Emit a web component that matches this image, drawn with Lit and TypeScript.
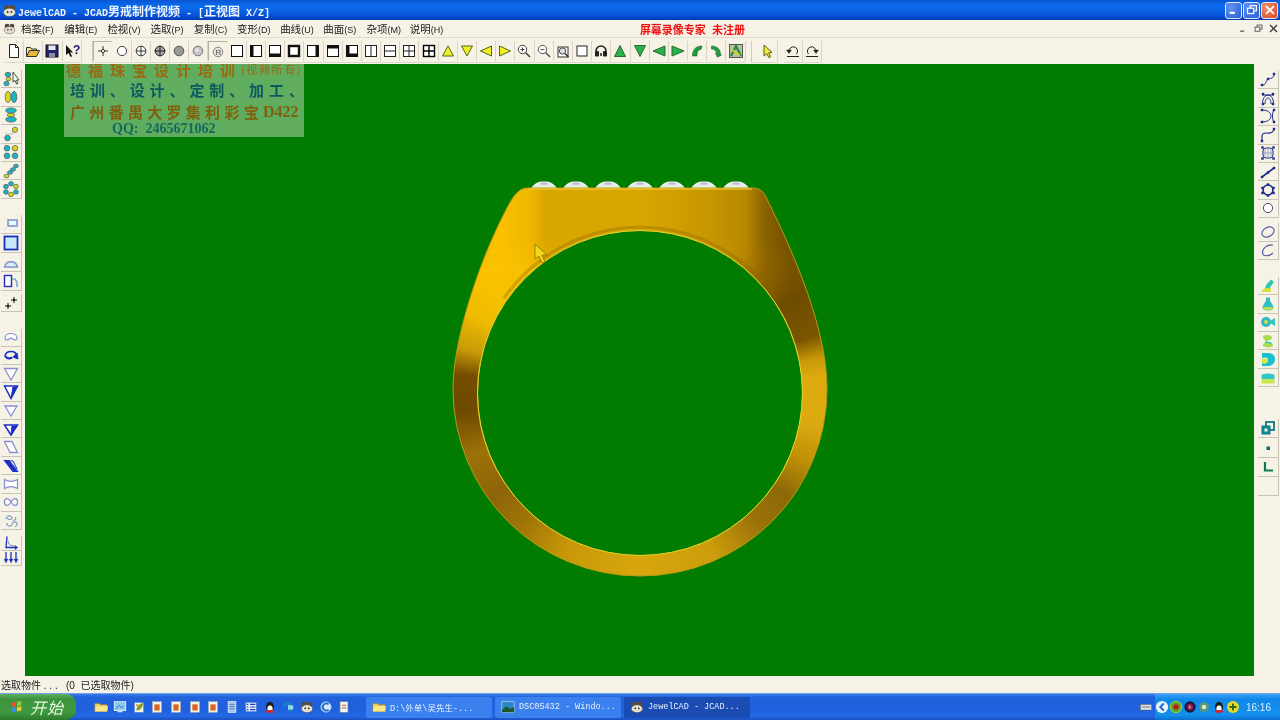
import { LitElement, html, css, svg, unsafeCSS } from "lit";
import { customElement } from "lit/decorators.js";

const BLUE = "#1c2fc4";
const TEAL = "#19b6c6";
const YEL = "#d6d81e";
const W = "#8a8fd0";

const ell = (x: number, y: number, rx: number, ry: number, f: string, s = "#555") =>
  svg`<ellipse cx=${x} cy=${y} rx=${rx} ry=${ry} fill=${f} stroke=${s} stroke-width=".7"/>`;
const poly = (p: string, f: string, s = "#333", w = 1) =>
  svg`<polygon points=${p} fill=${f} stroke=${s} stroke-width=${w}/>`;
const line = (d: string, s = "#222", w = 1) =>
  svg`<path d=${d} fill="none" stroke=${s} stroke-width=${w}/>`;
const node = (x: number, y: number, f = "#1b2a8a") => svg`<rect x=${x - 1.2} y=${y - 1.2} width="2.4" height="2.4" fill=${f}/>`;

// view panes: a square with the thick sides given by d
const pane = (d = "") => svg`<rect x="2.5" y="2.5" width="11" height="11" fill="#fff" stroke="#111"/>${d ? line(d, "#111", 3) : ""}`;

const topIcons = {
  file: [
    svg`<path d="M3.5 1.5h6l3 3v10h-9z" fill="#fff" stroke="#222"/><path d="M9.5 1.5v3h3" fill="none" stroke="#222"/>`,
    svg`<path d="M1.5 13.5v-9h4l1 1.5h5v2" fill="#f4e08a" stroke="#333"/><path d="M1.5 13.5l3-6h10l-3 6z" fill="#e2b93a" stroke="#333"/>`,
    svg`<rect x="2" y="2" width="12" height="12" fill="#23236e" stroke="#111"/><rect x="4.5" y="2.5" width="7" height="4.5" fill="#e8e8e8"/><rect x="5" y="10" width="6" height="4" fill="#8a8aa0"/>`,
    svg`<path d="M2 2v10l2.5-2 2 4 1.6-.8-2-3.8h3z" fill="#111"/><text x="9" y="11" font-size="12" font-weight="700" fill="#1a1a6a" font-family="Liberation Sans">?</text>`,
  ],
  view: [
    svg`${line("M8 3v10M3 8h10", "#333")}<circle cx="8" cy="8" r="1.6" fill="#fff" stroke="#333"/>`,
    svg`<circle cx="8" cy="8" r="4.6" fill="#fff" stroke="#444"/>`,
    svg`<circle cx="8" cy="8" r="4.8" fill="#fff" stroke="#333"/>${line("M8 3v10M3 8h10", "#333")}`,
    svg`<circle cx="8" cy="8" r="4.8" fill="#a8a8a8" stroke="#222"/>${line("M8 2.5v11M2.5 8h11", "#222")}`,
    svg`<circle cx="8" cy="8" r="4.8" fill="#9a9a9a" stroke="#555"/>`,
    svg`<circle cx="8" cy="8" r="4.8" fill="#c6c6c6" stroke="#777"/><circle cx="7" cy="7" r="2" fill="#e4e4e4"/>`,
    svg`<circle cx="8" cy="9" r="4.8" fill="#e4e0d6" stroke="#888"/><text x="5.4" y="12" font-size="8" fill="#555" font-family="Liberation Sans">R</text>`,
    pane(),
    pane("M4 3v10"),
    pane("M3 12h10"),
    svg`<rect x="3" y="3" width="10" height="10" fill="#fff" stroke="#111" stroke-width="2.4"/>`,
    pane("M12 3v10"),
    pane("M3 4h10"),
    svg`<rect x="2.5" y="2.5" width="11" height="11" fill="#fff" stroke="#111"/>${line("M4 3v10M3 12h10", "#111", 3)}`,
    svg`<rect x="2.5" y="2.5" width="11" height="11" fill="#fff" stroke="#222"/>${line("M8 3v10", "#222")}`,
    svg`<rect x="2.5" y="2.5" width="11" height="11" fill="#fff" stroke="#222"/>${line("M3 8h10", "#222")}`,
    svg`<rect x="2.5" y="2.5" width="11" height="11" fill="#fff" stroke="#222"/>${line("M8 3v10M3 8h10", "#222")}`,
    svg`<rect x="2.5" y="2.5" width="11" height="11" fill="#fff" stroke="#000" stroke-width="1.4"/>${line("M8 3v10M3 8h10", "#000", 1.4)}`,
    poly("8,3 13.5,13 2.5,13", "#f2ee2a", "#4a6a10"),
    poly("8,13 13.5,3 2.5,3", "#f2ee2a", "#4a6a10"),
    poly("2.5,8 13.5,3 13.5,13", "#f2ee2a", "#4a6a10"),
    poly("13.5,8 2.5,3 2.5,13", "#f2ee2a", "#4a6a10"),
    svg`<circle cx="6.5" cy="6.5" r="4.2" fill="#fff" stroke="#444"/>${line("M9.5 9.5l4.5 4.5", "#444", 1.6)}${line("M6.5 4.5v4M4.5 6.5h4", "#444")}`,
    svg`<circle cx="6.5" cy="6.5" r="4.2" fill="#fff" stroke="#555"/>${line("M9.5 9.5l4.5 4.5", "#555", 1.6)}${line("M4.5 6.5h4", "#555")}`,
    svg`<rect x="3" y="4" width="10" height="10" fill="#fff" stroke="#333"/><circle cx="7.5" cy="8" r="3.2" fill="#ddd" stroke="#444"/>${line("M10 10.5l3.5 3.5", "#333", 1.5)}`,
    svg`<rect x="3" y="3" width="10" height="10" fill="#fff" stroke="#222"/>`,
    svg`<path d="M3 8a5 5 0 0 1 10 0" fill="none" stroke="#222" stroke-width="1.6"/><rect x="2" y="8" width="4" height="5.5" rx="1" fill="#222"/><rect x="10" y="8" width="4" height="5.5" rx="1" fill="#222"/><rect x="7" y="10" width="2" height="3" fill="#555"/>`,
    poly("8,2.5 13.5,13.5 2.5,13.5", "#27b24a", "#2d6a2d"),
    poly("8,13.5 13.5,2.5 2.5,2.5", "#27b24a", "#2d6a2d"),
    poly("2,8 14,3 14,13", "#27b24a", "#2d6a2d"),
    poly("14,8 2,3 2,13", "#27b24a", "#2d6a2d"),
    svg`<path d="M13 3l-1 3.4C9 6.6 8 9 8 13H3.5c0-6 3-10 9.5-10z" fill="#1f9a3c" stroke="#1a6a2d" stroke-width=".6"/>`,
    svg`<path d="M3.5 3c6 0 9 4 9 8.5l1 .4-4 2.4-2-4 1 .4C8.6 8 6.5 6 3.5 6z" fill="#1f9a3c" stroke="#1a6a2d" stroke-width=".6"/>`,
    svg`<rect x="1.5" y="1.5" width="13" height="13" fill="#b8c0a0" stroke="#555"/><path d="M3 13L8 3l5 10" fill="none" stroke="#1f8a3c" stroke-width="2"/>${line("M4 7l8 5", "#d8d020", 2)}`,
  ],
  arrow: [svg`<path d="M4 2l8 7.5-3.4.3 2 4-1.8.8-2-4L4 13z" fill="#f4ee36" stroke="#5a5a10"/>`],
  undo: [
    svg`<path d="M4 8.5A4.3 4.3 0 1 1 11.5 11" fill="none" stroke="#222"/>${poly("1.5,7 6.5,7 4,10.5", "#222", "#222", .4)}${line("M2 13.5h12", "#222")}`,
    svg`<path d="M12 8.5A4.3 4.3 0 1 0 4.5 11" fill="none" stroke="#222"/>${poly("9.5,7 14.5,7 12,10.5", "#222", "#222", .4)}${line("M2 13.5h12", "#222")}`,
  ],
};

const cursorMark = svg`<path d="M10 1v10l2-1.6 1.6 3.6 1.4-.6L13.4 9H16z" fill="#fff" stroke="#222" stroke-width=".8"/>`;

const leftGroups = [
  { cls: "g1", items: [
    svg`${ell(5, 3.5, 2.8, 2.2, TEAL)}${ell(5.5, 8, 2.4, 1.9, YEL)}${ell(3.5, 12.5, 2.6, 2.2, TEAL)}${cursorMark}`,
    svg`${ell(5, 8, 2.8, 5.6, YEL)}${ell(11, 8, 2.8, 5.6, TEAL)}`,
    svg`${ell(8, 3.5, 5.4, 2.6, TEAL)}${ell(8, 8, 3.8, 1.8, YEL)}${ell(8, 12.5, 5.4, 2.6, TEAL)}`,
    svg`${line("M2 8h8V2", "#bbb")}${ell(12, 3.8, 2.6, 2.6, YEL)}${ell(4.5, 12, 2.8, 2.8, TEAL)}`,
    svg`${ell(4, 4.2, 2.8, 2.8, TEAL)}${ell(12, 4.2, 2.8, 2.8, YEL)}${ell(4, 11.8, 2.8, 2.8, TEAL)}${ell(12, 11.8, 2.8, 2.8, TEAL)}`,
    svg`${ell(3.5, 13, 2.6, 1.8, YEL)}${ell(7, 9.5, 2.6, 1.8, TEAL)}${ell(10, 6.5, 2.6, 1.8, TEAL)}${ell(13, 3, 2.4, 1.8, TEAL)}`,
    svg`${ell(8, 2.8, 2.4, 2.2, TEAL)}${ell(13, 5.5, 2.4, 2.2, YEL)}${ell(13, 11, 2.4, 2.2, TEAL)}${ell(8, 13.5, 2.4, 2.2, YEL)}${ell(3, 11, 2.4, 2.2, TEAL)}${ell(3, 5.5, 2.4, 2.2, TEAL)}`,
  ] },
  { cls: "g2", items: [
    svg`<rect x="5" y="4" width="9" height="6" fill="#dff" stroke=${W} stroke-width="1.6"/>${line("M1 14l4-4", "#cde", 1)}`,
    svg`<rect x="1.5" y="1.5" width="13" height="13" fill="#c8e8f8" stroke=${BLUE} stroke-width="1.8"/>`,
    svg`<path d="M1.5 13C3 6 13 6 14.5 13z" fill="#d4f0f8" stroke=${W} stroke-width="1.4"/>`,
    svg`<rect x="1.5" y="2.5" width="7" height="11" fill="#fff" stroke=${BLUE} stroke-width="1.4"/><path d="M9 6h3l2 3v5" fill="none" stroke="#7ad" stroke-width="1.6"/>`,
  ] },
  { cls: "g3", items: [
    svg`${line("M11 3v6M8 6h6M5 9v6M2 12h6", "#111", 1)}<circle cx="11" cy="6" r="1" fill="#111"/><circle cx="5" cy="12" r="1" fill="#111"/>`,
  ] },
  { cls: "g4", items: [
    svg`<path d="M2 9C2 3 14 3 14 9c0 3-3 2-6 0-3 2-6 3-6 0z" fill="#fff" stroke=${W} stroke-width="1.2"/>`,
    svg`<path d="M2 9C3 3 13 3 14 9" fill="none" stroke=${BLUE} stroke-width="1.6"/><path d="M2 9c2 3 6 3 7 1" fill="none" stroke=${BLUE} stroke-width="2.2"/>${poly("14,6 15,12 10,10", BLUE, BLUE)}`,
    poly("1.5,2.5 14.5,2.5 8,14", "#fff", W, 1.3),
    svg`${poly("1.5,2 14.5,2 8,14.5", "#fff", BLUE, 1.5)}${poly("10,3 14,3 8,14", BLUE, BLUE)}`,
    poly("2,4 14,4 8,14", "#fff", W, 1.3),
    svg`${poly("1.5,4 14.5,4 8,14", "#fff", BLUE, 1.5)}${poly("9,5 14,5 8,13.5", BLUE, BLUE)}`,
    poly("1.5,2.5 9,2.5 14.5,13.5 7,13.5", "#fff", W, 1.3),
    svg`${poly("1.5,2.5 6,2.5 14.5,13.5 10,13.5", BLUE, BLUE, 1.2)}${line("M6 3h4l4 8", BLUE, 1)}`,
    svg`<path d="M1.5 3.5C6 6 10 6 14.5 3.5v9C10 10 6 10 1.5 12.5z" fill="#fff" stroke=${W} stroke-width="1.3"/>`,
    svg`<path d="M8 8C5 3 1.5 4 1.5 8S5 13 8 8s6.500-4 6.500 0S11 13 8 8z" fill="#fff" stroke=${W} stroke-width="1.3"/>`,
    svg`${line("M3 6c0-4 6-4 6-1s-5 1-5 0M12 4c2 2 0 4-2 3M4 10c-1 3 4 4 5 2s-1-3 3-3 2 4 0 5", "#5a7ab0", 1)}`,
  ] },
  { cls: "g5", items: [
    svg`${line("M4 1.500L3 12.500h9", BLUE, 1.3)}${line("M5 6c1 4 3 5 6 5", "#5a7ab0", 1)}${poly("12,10.500 15,12.500 12,14.500", BLUE, BLUE, .4)}`,
    svg`${line("M3 2v8M8 2v8M13 2v8", BLUE, 1.3)}${poly("1,9 5,9 3,13", BLUE, BLUE, .3)}${poly("6,9 10,9 8,13", BLUE, BLUE, .3)}${poly("11,9 15,9 13,13", BLUE, BLUE, .3)}`,
  ] },
];

const N = "#1b2a8a";
const rightGroups = [
  { cls: "r1", items: [
    svg`${line("M2 13c4 1 4-5 6-6s6 0 6-5", N, 1)}${node(2, 13)}${node(8, 7)}${node(14, 2)}`,
    svg`${line("M2.500 14C2.500 2 13.500 2 13.500 14M5 14C5 6 11 6 11 14M2 5h12", N, 1)}${node(3, 4)}${node(13, 4)}${node(3, 14)}${node(13, 14)}`,
    svg`${line("M2 2c6 0 9 3 9 6s-3 6-9 6", N, 1)}${line("M14 2c-2 2-2 10 0 12", N, 1)}${node(2, 2)}${node(2, 14)}${node(14, 2)}${node(14, 14)}`,
    svg`${line("M2 14V9c0-3 4-3 5-3s6 1 7-4", N, 1.2)}${node(2, 14)}${node(14, 2)}`,
    svg`<rect x="3" y="3" width="10" height="10" rx="3" fill="none" stroke=${N}/>${line("M3 8h10M8 3v10M5 3v10M11 3v10", "#7a86b8", .7)}${node(2.500, 2.500)}${node(13.500, 2.500)}${node(2.500, 13.500)}${node(13.500, 13.500)}`,
    svg`${line("M2 13L14 4", N, 1.6)}${node(2, 13)}${node(8, 8.500)}${node(14, 4)}`,
    svg`<circle cx="8" cy="8" r="5" fill="none" stroke=${N} stroke-width="1.6"/>${node(8, 2.500)}${node(13.500, 6)}${node(13.500, 11)}${node(8, 13.500)}${node(2.500, 11)}${node(2.500, 6)}`,
    svg`<circle cx="8" cy="8" r="4.600" fill="#fff" stroke="#46507c"/>`,
  ] },
  { cls: "r2", items: [
    svg`<ellipse cx="8" cy="8" rx="6.500" ry="4.600" transform="rotate(-30 8 8)" fill="none" stroke="#5a5aa8" stroke-width="1.100"/>`,
    svg`<path d="M13 3C7 2 2 7 2.500 11S9 14.500 13 11" fill="none" stroke="#5a5aa8" stroke-width="1.100"/>`,
  ] },
  { cls: "r3", items: [
    svg`<path d="M11 1.500l3 2.500-5 7H5l1-4z" fill="#33c8b0"/><path d="M2 14c0-3 2-4 4-4h5v4z" fill="#d0e040"/>`,
    svg`<path d="M6 1.500h4v3l3.500 6c0 3-2 4-5.500 4s-5.500-1-5.500-4L6 4.500z" fill="#30c0c8"/><path d="M3 11h10c0 2-2 3.500-5 3.500S3 13 3 11z" fill="#b8e050"/>`,
    svg`<circle cx="6" cy="8" r="5" fill="#30b8c8"/><path d="M10 7l5-3v8l-5-3z" fill="#30c8c0"/><circle cx="6" cy="8" r="2" fill="#d0e040"/>`,
    svg`<path d="M3 3c4-2 9-1 9 2s-7 2-7 4 8 0 8 3-6 3-10 1c-1-3 4-3 4-4S3 7 3 3z" fill="#a8dc50"/><path d="M5 9c3 1 6 0 6 2" stroke="#30c8b0" stroke-width="1.400" fill="none"/>`,
    svg`<path d="M2 2h6c5 0 7 3 7 6s-2 7-7 7H2v-3c3 1 6 0 6-3s-3-3-6-2z" fill="#18c0d0"/><path d="M2 8c4-1 6 0 6 2s-2 3-6 2z" fill="#d8e840"/>`,
    svg`<path d="M1.500 5c4-2 9-2 13 0v4H1.500z" fill="#30c8c8"/><rect x="1.500" y="9" width="13" height="4.500" fill="#c8e850"/>`,
  ] },
  { cls: "r4", items: [
    svg`<rect x="6" y="2" width="8" height="8" fill="none" stroke="#0f7a82" stroke-width="1.800"/><rect x="2" y="6" width="8" height="8" fill="#0f8a92" stroke="#0f7a82"/><rect x="4.500" y="8.500" width="3" height="3" fill="#f4f0e4"/>`,
    svg`<rect x="6.500" y="6.500" width="3.500" height="3.500" fill="#0f6a72"/>`,
    svg`${line("M5 3v8.500h8", "#0f7a52", 2.200)}`,
    svg``,
  ] },
];

const menus = [
  ["档案", "F"], ["编辑", "E"], ["检视", "V"], ["选取", "P"], ["复制", "C"],
  ["变形", "D"], ["曲线", "U"], ["曲面", "S"], ["杂项", "M"], ["说明", "H"],
];

const xpFolder = svg`<path d="M1 13V4h5l1.500 1.500H15V13z" fill="#f2cf5a" stroke="#a8842a" stroke-width=".7"/><path d="M1 13l1-6h14l-1 6z" fill="#fbe58a"/>`;
const ringFace = svg`<circle cx="5" cy="5" r="3" fill="#5a4a3a"/><circle cx="11" cy="5" r="3" fill="#5a4a3a"/><ellipse cx="8" cy="10" rx="6.500" ry="4.500" fill="#e8e0d0" stroke="#444" stroke-width=".6"/><circle cx="6" cy="9.500" r="1" fill="#222"/><circle cx="10" cy="9.500" r="1" fill="#222"/>`;
const redBook = svg`<rect x="3" y="2" width="10" height="12" fill="#f4f2e8" stroke="#c8c4b0" stroke-width=".5"/><rect x="5" y="5" width="6" height="7" fill="#d8641c"/>`;
const penguin = svg`<ellipse cx="8" cy="8" rx="4.500" ry="6" fill="#1a1a1a"/><ellipse cx="8" cy="10" rx="3" ry="3.600" fill="#fff"/><path d="M3 13c2-2 8-2 10 0l-2 1.500H5z" fill="#e02020"/><path d="M6.500 6h3L8 7.500z" fill="#f0b020"/>`;

const quick = [
  xpFolder,
  svg`<rect x="1.500" y="2" width="13" height="10" fill="#8ec8ee" stroke="#e8f4ff"/><path d="M3 10l4-4 3 3 2-2" stroke="#2a6aa8" fill="none"/><rect x="5" y="12" width="6" height="2" fill="#cde"/>`,
  svg`<rect x="3" y="3" width="10" height="11" fill="#f4f4ea"/><path d="M5 12c0-5 4-8 8-9-1 5-3 9-8 9z" fill="#7aa020"/><circle cx="6" cy="6" r="1.500" fill="#e8a020"/>`,
  redBook, redBook, redBook, redBook,
  svg`<rect x="3.500" y="1.500" width="9" height="13" fill="#aac4ec" stroke="#e4eefc" stroke-width=".7"/>${line("M5 5h6M5 7.500h6M5 10h6", "#4a6ab0", .8)}`,
  svg`<rect x="2" y="3" width="12" height="10" fill="#e8f0fc"/>${line("M3 5h2M7 5h6M3 8h2M7 8h6M3 11h2M7 11h6", "#1a3a9c", 1.300)}`,
  penguin,
  svg`<path d="M2 3l10-1v12l-4-1V6L2 7z" fill="#1f7ac8"/><path d="M8 6h6v5H8z" fill="#8adce8"/>`,
  ringFace,
  svg`<circle cx="8" cy="8" r="6" fill="#d8e8fc" stroke="#7ab0e8"/><path d="M11 5A4 4 0 1 0 11 11" stroke="#2868c8" stroke-width="2" fill="none"/>`,
  svg`<rect x="3.500" y="2" width="9" height="12" fill="#f4f4f0" stroke="#888" stroke-width=".6"/>${line("M5.500 6h5M5.500 9h5", "#a05020", 1)}`,
];

const tray = [
  svg`<rect x="1.500" y="5" width="13" height="6.500" fill="#dde4ee" stroke="#555" stroke-width=".6"/>${line("M3 8h10", "#666", 1)}`,
  svg`<circle cx="8" cy="8" r="7" fill="#e8f4fc"/><path d="M10 4L6 8l4 4" stroke="#1a6ad0" stroke-width="2.200" fill="none"/>`,
  svg`<circle cx="8" cy="8" r="6.500" fill="#50b030" stroke="#c0d820"/><circle cx="8" cy="8" r="3.200" fill="#c81818"/>`,
  svg`<circle cx="8" cy="8" r="6.500" fill="#1a1a3a"/><circle cx="8" cy="8" r="3.600" fill="#a01848"/><path d="M6.800 6l3 2-3 2z" fill="#8ab0f0"/>`,
  svg`<path d="M2 5l6-3 6 3-2 8H4z" fill="#5a9a70"/><circle cx="8" cy="8" r="2.600" fill="#d8e8e0"/>`,
  penguin,
  svg`<circle cx="8" cy="8" r="6.800" fill="#ecd820"/><path d="M8 4v8M4 8h8" stroke="#2a6a1a" stroke-width="2.200"/>`,
];

const RING_PATH =
  "M88 17L312 17C319 17 323 20 325 24C345 65 387 150 387 218A187 187 0 0 1 13 218C13 170 38 92 67 37C75 22 80 17 88 17ZM37.500 222A162.500 162.500 0 1 0 362.500 222A162.500 162.500 0 1 0 37.500 222Z";

@customElement("app-root")
export class AppRoot extends LitElement {
  static styles = css`
    :host {
      display: block;
      width: 1280px;
      height: 720px;
      overflow: hidden;
      font-family: "Liberation Sans", "Noto Sans CJK SC", sans-serif;
    }
    .app {
      width: 1280px;
      height: 720px;
      display: flex;
      flex-direction: column;
      background: #f6f2e6;
      filter: blur(0.4px);
    }
    svg {
      display: block;
      flex: none;
    }

    .titlebar {
      height: 20px;
      flex: none;
      display: flex;
      align-items: center;
      background: linear-gradient(#0a55d5, #0a6cec 30%, #0a62e4 55%, #0548d0 88%, #0238a8);
      color: #eef4ff;
      font: 700 10px "Liberation Mono", "Noto Sans CJK SC", monospace;
      padding: 0 2px;
      box-sizing: border-box;
    }
    .title-text {
      margin-left: 1px;
      white-space: pre;
    }
    .cjk {
      font: 700 12px "Noto Sans CJK SC", sans-serif;
    }
    .win-btns {
      margin-left: auto;
      display: flex;
      gap: 1px;
    }
    .win-btn {
      width: 17px;
      height: 17px;
      border: 1px solid #dfe8ff;
      border-radius: 3px;
      box-sizing: border-box;
      background: radial-gradient(circle at 30% 30%, #5f92f2, #2a5fd8);
      display: flex;
      align-items: center;
      justify-content: center;
    }
    .win-btn.close {
      background: radial-gradient(circle at 30% 30%, #f09070, #d8481c);
    }

    .menubar {
      height: 17px;
      flex: none;
      display: flex;
      align-items: center;
      padding-left: 3px;
      font-size: 10.5px;
      color: #222;
      border-bottom: 1px solid #e2decf;
    }
    .menu-item {
      width: 43.200px;
      white-space: nowrap;
    }
    .menu-items {
      display: flex;
      margin-left: 5px;
    }
    .latin {
      font-size: 9px;
    }
    .reg {
      margin-left: 187px;
      color: #ee1010;
      font-size: 11px;
      font-weight: 700;
      white-space: pre;
    }
    .mdi {
      margin-left: auto;
      display: flex;
      gap: 4px;
      padding-right: 1px;
    }

    .toolbar {
      height: 26px;
      flex: none;
      display: flex;
      align-items: center;
      padding: 1px 0 0 5px;
      box-sizing: border-box;
    }
    .tgroup {
      display: flex;
      height: 21px;
      align-items: center;
      border-bottom: 1px solid #dcd8ca;
    }
    .tgroup.view {
      margin-left: 10.500px;
      border-left: 1px solid #cfcbbc;
    }
    .tgroup.arrow {
      margin-left: 5px;
      border-left: 1px solid #cfcbbc;
      padding-left: 7px;
    }
    .tgroup.undo {
      margin-left: 6px;
    }
    .tb {
      width: 19.200px;
      height: 20px;
      box-sizing: border-box;
      display: flex;
      align-items: center;
      justify-content: center;
      border-right: 1px solid #d8d4c6;
    }
    .tb.on {
      border: 1px solid #b4b0a2;
      border-right-color: #f4f0e2;
      border-bottom-color: #f4f0e2;
    }

    .main {
      flex: 1;
      min-height: 0;
      display: flex;
    }
    .side {
      flex: none;
      display: flex;
      flex-direction: column;
      box-sizing: border-box;
    }
    .side.left {
      width: 25px;
      padding: 6px 3px 0 1px;
    }
    .side.right {
      width: 26px;
      padding: 7px 1px 0 4px;
    }
    .sgroup {
      display: flex;
      flex-direction: column;
    }
    .sb {
      height: 18.400px;
      flex: none;
      display: flex;
      align-items: center;
      justify-content: center;
      box-sizing: border-box;
      border-right: 1px solid #c8c4b6;
      border-bottom: 1px solid #c8c4b6;
    }
    .g2 {
      margin-top: 16px;
    }
    .g2 .sb {
      height: 19px;
    }
    .g3 {
      margin-top: 3px;
    }
    .g4 {
      margin-top: 16px;
    }
    .g5 {
      margin-top: 6px;
    }
    .g5 .sb {
      height: 15px;
    }
    .r2 {
      margin-top: 5px;
    }
    .r3 {
      margin-top: 17px;
    }
    .r4 {
      margin-top: 32px;
    }
    .r4 .sb {
      height: 19.200px;
    }

    .canvas {
      flex: 1;
      position: relative;
      background: #017c01;
      overflow: hidden;
    }
    .watermark {
      position: absolute;
      left: 39px;
      top: 0;
      width: 240px;
      height: 73px;
      background: #60ad60;
      display: grid;
      grid-template-rows: 11px 29px 15px 18px;
      font-family: "Noto Sans CJK SC", sans-serif;
      font-weight: 700;
      font-size: 15px;
      line-height: 15px;
      white-space: nowrap;
    }
    .wm {
      display: flex;
      align-items: center;
    }
    .wm1 {
      color: #9a6a10;
      padding-left: 2px;
      letter-spacing: 7px;
      line-height: 11px;
    }
    .wm-small {
      font-size: 11px;
      letter-spacing: 1.600px;
      font-weight: 400;
      margin-left: -1px;
    }
    .wm2 {
      color: #0d5a62;
      padding-left: 6px;
      letter-spacing: 4.900px;
    }
    .wm3 {
      color: #80600c;
      padding-left: 6px;
      letter-spacing: 4.300px;
    }
    .wm-serif {
      font-family: "Liberation Serif", serif;
      font-size: 16px;
      letter-spacing: 0;
    }
    .wm4 {
      color: #14685e;
      padding: 2px 0 0 48px;
      font: 700 14px "Liberation Serif", serif;
      white-space: pre;
    }

    /* ring sits on the free canvas, at its place in the view */
    .ring-box {
      position: absolute;
      left: 415px;
      top: 107px;
      width: 400px;
      height: 420px;
    }
    .band {
      position: absolute;
      inset: 0;
      clip-path: path(evenodd, "${unsafeCSS(RING_PATH)}");
    }
    .conic {
      position: absolute;
      inset: 0;
      background: conic-gradient(
        from 0deg at 200px 222px,
        #d8a400 0deg,
        #cc9800 30deg,
        #946800 45deg,
        #6e4c00 58deg,
        #7a5600 72deg,
        #c89a08 79deg,
        #deaa10 85deg,
        #dcaa10 100deg,
        #c09008 112deg,
        #8c6808 125deg,
        #9a7208 138deg,
        #cc9c0c 155deg,
        #d8a60c 180deg,
        #c89808 205deg,
        #a07408 222deg,
        #8c6408 235deg,
        #9c7208 250deg,
        #6e4a00 264deg,
        #744e00 276deg,
        #c89a08 284deg,
        #f0bc00 295deg,
        #ffc800 320deg,
        #e0ac00 345deg,
        #d8a400 360deg
      );
    }
    .plate {
      position: absolute;
      inset: 0;
      background: linear-gradient(
        90deg,
        #fbc000 60px,
        #eeb600 92px,
        #daa600 104px,
        #d8a600 200px,
        #c89600 270px,
        #b88800 305px,
        #8a6200 325px,
        #6e4c00 352px
      );
      -webkit-mask-image: linear-gradient(#000 70px, transparent 135px);
      mask-image: linear-gradient(#000 70px, transparent 135px);
    }
    .ring-lines {
      position: absolute;
      inset: 0;
    }
    .stones {
      position: absolute;
      left: 91px;
      top: 10px;
      display: flex;
      gap: 6px;
    }

    .statusbar {
      height: 17px;
      flex: none;
      display: flex;
      align-items: center;
      padding-left: 1px;
      font-size: 10px;
      color: #222;
      white-space: pre;
    }
    .taskbar {
      height: 27px;
      flex: none;
      display: flex;
      align-items: center;
      box-sizing: border-box;
      border-top: 1px solid #6ea4f0;
      background: linear-gradient(#3a7cec, #2263dc 12%, #1f5fdc 55%, #2468e4 85%, #1a50c0);
    }
    .start {
      width: 76px;
      height: 26px;
      flex: none;
      display: flex;
      align-items: center;
      gap: 6px;
      padding-left: 10px;
      box-sizing: border-box;
      color: #e8f4e0;
      font-size: 16px;
      font-style: italic;
      letter-spacing: 1px;
      border-radius: 0 10px 10px 0;
      background: linear-gradient(#5fae5f, #3d933d 20%, #3f9a3f 70%, #2c7a2c);
    }
    .quick {
      display: flex;
      margin-left: 16px;
      width: 274px;
      flex: none;
    }
    .q {
      width: 18.700px;
      flex: none;
      display: flex;
      justify-content: center;
    }
    .tasks {
      display: flex;
      gap: 3px;
    }
    .task {
      height: 21px;
      width: 126px;
      display: flex;
      align-items: center;
      gap: 4px;
      padding-left: 6px;
      box-sizing: border-box;
      border-radius: 2px;
      background: #3a80ee;
      color: #e8f0ff;
      font: 8.500px "Liberation Mono", "Noto Sans CJK SC", monospace;
      white-space: pre;
      overflow: hidden;
    }
    .task.active {
      background: #1a4cb4;
    }
    .tray {
      margin-left: auto;
      height: 26px;
      display: flex;
      align-items: center;
      color: #dcecff;
      font-size: 10px;
    }
    .tray-keyboard {
      margin-right: 2px;
    }
    .tray-area {
      height: 26px;
      display: flex;
      align-items: center;
      gap: 0.200px;
      background: linear-gradient(#3ea0f4, #1088ea 20%, #1290ec 80%, #0c70d0);
    }
    .clock {
      margin-left: 6px;
      padding-right: 9px;
    }
  `;

  private icon(content: unknown, size = 16) {
    return html`<svg viewBox="0 0 16 16" width=${size} height=${size}>${content}</svg>`;
  }

  private renderSide(groups: { cls: string; items: unknown[] }[], side: string) {
    return html`<div class="side ${side}">
      ${groups.map(
        (g) => html`<div class="sgroup ${g.cls}">
          ${g.items.map((i) => html`<div class="sb">${this.icon(i)}</div>`)}
        </div>`
      )}
    </div>`;
  }

  private renderRing() {
    const stones = [0, 1, 2, 3, 4, 5, 6];
    return html`<div class="ring-box">
      <div class="stones">
        ${stones.map(
          () => html`<svg width="26" height="7" viewBox="0 0 26 7">
            <path d="M0 7C3 3 7 .5 10 .5h6c3 0 7 2.500 10 6.500z" fill="#e8eeea"/>
            <path d="M8 3l3-1.500h4l3 1.500-5 1z" fill="#b8bcd4"/>
          </svg>`
        )}
      </div>
      <div class="band">
        <div class="conic"></div>
        <div class="plate"></div>
      </div>
      <svg class="ring-lines" width="400" height="420" viewBox="0 0 400 420">
        <path d="M64 127A166 166 0 0 1 336 127" fill="none" stroke="#8a6400" stroke-width="3" opacity=".35"/>
        <path d=${RING_PATH} fill="none" stroke="#b89a10" stroke-width="1"/>
        <circle cx="200" cy="222" r="162.500" fill="none" stroke="#e8d428" stroke-width="1"/>
        <path d="M88 18L312 18" stroke="#f2d840" stroke-width="1"/>
        <path d="M95 73v15l4-3 3 7 3-1-3-7h5z" fill="#f0d818" stroke="#8a7000" stroke-width=".8"/>
      </svg>
    </div>`;
  }

  render() {
    return html`<div class="app">
      <div class="titlebar">
        ${this.icon(ringFace, 15)}
        <span class="title-text">JewelCAD - JCAD<span class="cjk">男戒制作视频</span> - [<span class="cjk">正视图</span> X/Z]</span>
        <div class="win-btns">
          <div class="win-btn">${this.icon(svg`<rect x="3" y="10" width="6" height="2.500" fill="#fff"/>`, 14)}</div>
          <div class="win-btn">${this.icon(svg`<rect x="6" y="3" width="7" height="6" fill="none" stroke="#fff" stroke-width="1.300"/><rect x="3" y="6" width="7" height="6" fill="#3a6ee0" stroke="#fff" stroke-width="1.300"/>`, 14)}</div>
          <div class="win-btn close">${this.icon(svg`<path d="M3.500 3.500l9 9M12.500 3.500l-9 9" stroke="#fff" stroke-width="2"/>`, 14)}</div>
        </div>
      </div>

      <div class="menubar">
        ${this.icon(ringFace, 13)}
        <div class="menu-items">
          ${menus.map(([t, k]) => html`<span class="menu-item">${t}<span class="latin">(${k})</span></span>`)}
        </div>
        <span class="reg">屏幕录像专家  未注册</span>
        <div class="mdi">
          ${this.icon(svg`<rect x="3" y="11" width="6" height="1.600" fill="#444"/>`, 11)}
          ${this.icon(svg`<rect x="6" y="3" width="7" height="6" fill="none" stroke="#555" stroke-width="1.300"/><rect x="3" y="6" width="7" height="6" fill="#f6f2e6" stroke="#555" stroke-width="1.300"/>`, 11)}
          ${this.icon(svg`<path d="M3 3l10 10M13 3L3 13" stroke="#444" stroke-width="2.200"/>`, 11)}
        </div>
      </div>

      <div class="toolbar">
        <div class="tgroup">${topIcons.file.map((i) => html`<div class="tb">${this.icon(i)}</div>`)}</div>
        <div class="tgroup view">${topIcons.view.map((i, n) => html`<div class="tb ${n === 0 || n === 6 ? "on" : ""}">${this.icon(i)}</div>`)}</div>
        <div class="tgroup arrow">${topIcons.arrow.map((i) => html`<div class="tb">${this.icon(i)}</div>`)}</div>
        <div class="tgroup undo">${topIcons.undo.map((i) => html`<div class="tb">${this.icon(i)}</div>`)}</div>
      </div>

      <div class="main">
        ${this.renderSide(leftGroups, "left")}
        <div class="canvas">
          <div class="watermark">
            <div class="wm wm1">德福珠宝设计培训<span class="wm-small">(视频所有)</span></div>
            <div class="wm wm2">培训、设计、定制、加工、</div>
            <div class="wm wm3">广州番禺大罗集利彩宝<span class="wm-serif">D422</span></div>
            <div class="wm wm4">QQ:  2465671062</div>
          </div>
          ${this.renderRing()}
        </div>
        ${this.renderSide(rightGroups, "right")}
      </div>

      <div class="statusbar">选取物件 . . .   (0  已选取物件)</div>

      <div class="taskbar">
        <div class="start">
          ${this.icon(svg`<path d="M2 3l5-1v5l-5 1z" fill="#e8502a"/><path d="M8 2l5-1v5l-5 1z" fill="#8cc63e"/><path d="M2 9l5-1v5l-5 1z" fill="#3a8ee8"/><path d="M8 8l5-1v5l-5 1z" fill="#f4c81e"/>`, 14)}
          <span>开始</span>
        </div>
        <div class="quick">${quick.map((i) => html`<div class="q">${this.icon(i, 14)}</div>`)}</div>
        <div class="tasks">
          <div class="task">${this.icon(xpFolder, 14)}<span>D:\\外单\\吴先生-...</span></div>
          <div class="task">${this.icon(svg`<rect x="1" y="2" width="14" height="12" fill="#2a8ac8" stroke="#e8f0f8" stroke-width=".6"/><path d="M1 11l5-4 4 3 5-2v6H1z" fill="#1a5a2a"/>`, 14)}<span>DSC05432 - Windo...</span></div>
          <div class="task active">${this.icon(ringFace, 14)}<span>JewelCAD - JCAD...</span></div>
        </div>
        <div class="tray">
          <div class="tray-keyboard">${this.icon(tray[0], 14)}</div>
          <div class="tray-area">
            ${tray.slice(1).map((i) => this.icon(i, 14))}
            <span class="clock">16:16</span>
          </div>
        </div>
      </div>
    </div>`;
  }
}
